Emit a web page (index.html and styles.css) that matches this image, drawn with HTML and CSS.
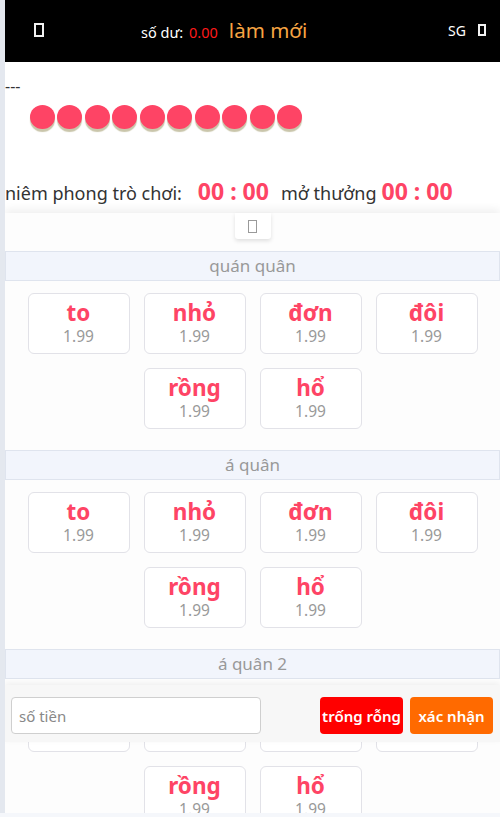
FILE: index.html
```html
<!DOCTYPE html>
<html lang="vi">
<head>
<meta charset="utf-8">
<title>game</title>
<link rel="stylesheet" href="styles.css">
</head>
<body>
<div class="app">
  <header class="top">
    <span class="tofu tofu-light top-left"></span>
    <div class="balance">
      <span class="bal-label">số dư:</span>
      <span class="bal-value">0.00</span>
      <span class="refresh">làm mới</span>
    </div>
    <div class="top-right">
      <span class="region">SG</span>
      <span class="tofu tofu-light tofu-small"></span>
    </div>
  </header>

  <div class="history">---</div>
  <div class="balls">
    <span class="ball"></span><span class="ball"></span><span class="ball"></span><span class="ball"></span><span class="ball"></span>
    <span class="ball"></span><span class="ball"></span><span class="ball"></span><span class="ball"></span><span class="ball"></span>
  </div>

  <div class="timer">
    <span class="t-label">niêm phong trò chơi:</span>
    <span class="t-value">00 : 00</span>
    <span class="t-label t-open">mở thưởng</span>
    <span class="t-value t-value2">00 : 00</span>
  </div>

  <div class="panel">
    <div class="tab-row"><span class="tab-btn"><span class="tofu tofu-gray"></span></span></div>

    <section class="group">
      <div class="group-title">quán quân</div>
      <div class="cards">
        <div class="card"><b>to</b><span>1.99</span></div>
        <div class="card"><b>nhỏ</b><span>1.99</span></div>
        <div class="card"><b>đơn</b><span>1.99</span></div>
        <div class="card"><b>đôi</b><span>1.99</span></div>
        <div class="card"><b>rồng</b><span>1.99</span></div>
        <div class="card"><b>hổ</b><span>1.99</span></div>
      </div>
    </section>

    <section class="group">
      <div class="group-title">á quân</div>
      <div class="cards">
        <div class="card"><b>to</b><span>1.99</span></div>
        <div class="card"><b>nhỏ</b><span>1.99</span></div>
        <div class="card"><b>đơn</b><span>1.99</span></div>
        <div class="card"><b>đôi</b><span>1.99</span></div>
        <div class="card"><b>rồng</b><span>1.99</span></div>
        <div class="card"><b>hổ</b><span>1.99</span></div>
      </div>
    </section>

    <section class="group">
      <div class="group-title">á quân 2</div>
      <div class="cards">
        <div class="card"><b>to</b><span>1.99</span></div>
        <div class="card"><b>nhỏ</b><span>1.99</span></div>
        <div class="card"><b>đơn</b><span>1.99</span></div>
        <div class="card"><b>đôi</b><span>1.99</span></div>
        <div class="card"><b>rồng</b><span>1.99</span></div>
        <div class="card"><b>hổ</b><span>1.99</span></div>
      </div>
    </section>
  </div>

  <div class="betbar">
    <input class="amount" type="text" placeholder="số tiền">
    <div class="bar-btns">
      <button class="btn btn-clear">trống rỗng</button>
      <button class="btn btn-ok">xác nhận</button>
    </div>
  </div>
</div>
</body>
</html>
```

FILE: styles.css
```css
* { box-sizing: border-box; }
html, body {
  margin: 0;
  padding: 0;
  background: #f5f7fb;
  font-family: "Noto Sans", "Open Sans", sans-serif;
}
.app {
  position: relative;
  height: 813px;
  border-left: 5px solid #e4e8ef;
  background: #fff;
  display: flex;
  flex-direction: column;
  overflow: hidden;
}
.top {
  height: 62px;
  flex: none;
  background: #000;
  display: flex;
  align-items: center;
  padding: 0 14px 0 29px;
  color: #fff;
}
.tofu {
  display: inline-block;
  width: 10px;
  height: 14px;
  border: 2px solid #fff;
}
.tofu-light { border-color: #f2f2f2; }
.tofu-small { width: 8px; height: 12px; }
.tofu-gray { width: 9px; height: 13px; border: 1.5px solid #9a9a9a; }
.top-left { margin-top: -2px; }
.balance {
  flex: 1;
  display: flex;
  align-items: baseline;
  justify-content: flex-start;
  margin-left: 97px;
  margin-top: -2px;
}
.bal-label { font-size: 14.5px; }
.bal-value { font-size: 14.5px; color: #ff1a1a; margin-left: 6px; }
.refresh { font-size: 20.5px; color: #f6a443; margin-left: 11px; }
.top-right { display: flex; align-items: center; gap: 12px; margin-top: -2px; }
.region { font-size: 14px; }

.history {
  font-size: 16px;
  line-height: 24px;
  margin-top: 12px;
  color: #333;
}
.balls {
  display: flex;
  gap: 2.45px;
  padding-left: 25px;
  margin-top: 7px;
  height: 27px;
}
.ball {
  width: 25px;
  height: 24px;
  border-radius: 50%;
  background: #fe4465;
  box-shadow: 0 3px 1px #c9c5aa;
}
.timer {
  display: flex;
  align-items: baseline;
  margin-top: 47px;
  line-height: 30px;
  color: #333;
}
.t-label { font-size: 18px; }
.t-value { font-size: 23px; font-weight: bold; color: #fe4465; margin-left: 16px; }
.t-open { margin-left: 12px; }
.t-value2 { margin-left: 5px; }

.panel {
  flex: 1;
  margin-top: 5px;
  background: #fdfdfd;
  box-shadow: 0 -4px 8px rgba(0,0,0,0.06);
  padding-bottom: 60px;
}
.tab-row {
  display: flex;
  justify-content: center;
  height: 38px;
}
.tab-btn {
  width: 36px;
  height: 26px;
  background: #fff;
  border-radius: 0 0 3px 3px;
  box-shadow: 0 2px 4px rgba(0,0,0,0.12);
  display: flex;
  align-items: center;
  justify-content: center;
}
.group { margin-bottom: 21px; }
.group-title {
  height: 30px;
  line-height: 28px;
  background: #f2f5fc;
  border: 1px solid #dfe4ee;
  text-align: center;
  color: #999;
  font-size: 17px;
}
.cards {
  display: flex;
  flex-wrap: wrap;
  justify-content: center;
  gap: 14px 14px;
  padding: 12px 0 0;
  width: 450px;
  margin: 0 auto;
}
.card {
  width: 102px;
  height: 61px;
  border: 1px solid #e2e2e8;
  border-radius: 6px;
  background: #fff;
  display: flex;
  flex-direction: column;
  align-items: center;
  justify-content: center;
  padding-bottom: 1px;
}
.card b {
  font-size: 22.5px;
  line-height: 26px;
  color: #fe4465;
}
.card span {
  font-size: 15.5px;
  line-height: 20px;
  color: #999;
}

.betbar {
  position: absolute;
  left: 0;
  right: 0;
  top: 685px;
  height: 57px;
  background: #f7f7f7;
  box-shadow: 0 -2px 6px rgba(0,0,0,0.06);
  display: flex;
  align-items: flex-start;
  justify-content: space-between;
  padding: 12px 7px 0 6px;
}
.amount {
  width: 250px;
  height: 37px;
  border: 1px solid #cfcfcf;
  border-radius: 4px;
  background: #fff;
  padding: 0 7px;
  font-family: inherit;
  font-size: 15px;
  color: #333;
}
.amount::placeholder { color: #888; }
.bar-btns { display: flex; gap: 7px; }
.btn {
  height: 37px;
  width: 83px;
  border: none;
  border-radius: 4px;
  color: #fff;
  font-family: inherit;
  font-size: 15px;
  font-weight: 600;
  padding: 0;
}
.btn-clear { background: #ff0000; }
.btn-ok { background: #ff6a00; }
```
